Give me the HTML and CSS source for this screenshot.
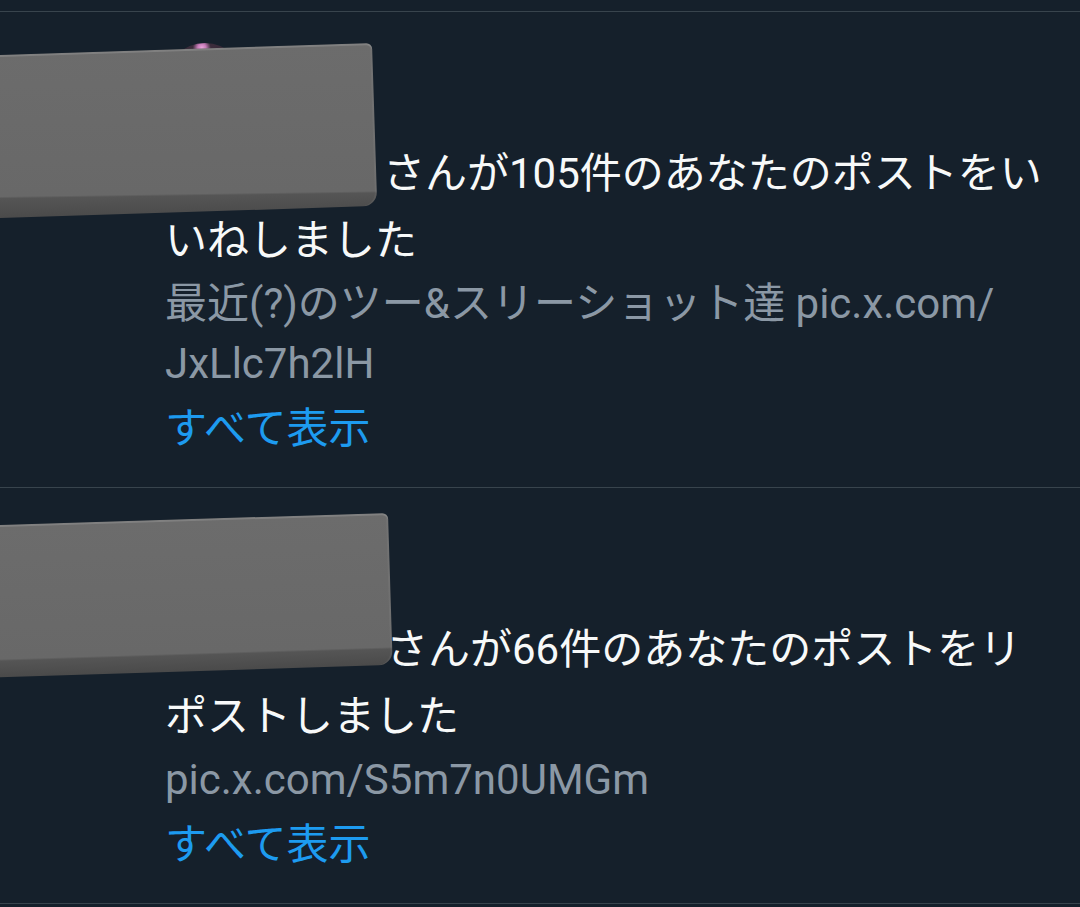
FILE: index.html
```html
<!DOCTYPE html>
<html lang="ja">
<head>
<meta charset="utf-8">
<title>通知</title>
<link rel="stylesheet" href="styles.css">
</head>
<body>
<div class="feed">
  <article class="notif">
    <div class="icon-col">
      <svg class="icon icon-like" viewBox="0 0 24 24" aria-hidden="true"><path d="M20.884 13.19c-1.351 2.48-4.001 5.12-8.379 7.67l-.503.3-.504-.3c-4.379-2.55-7.029-5.19-8.382-7.67-1.36-2.5-1.41-4.86-.514-6.67.887-1.79 2.647-2.91 4.601-3.01 1.651-.09 3.368.56 4.798 2.01 1.429-1.45 3.146-2.1 4.796-2.01 1.954.1 3.714 1.22 4.601 3.01.896 1.81.846 4.17-.514 6.67z"/></svg>
    </div>
    <div class="content">
      <div class="avatar avatar-a"></div>
      <p class="title"><span class="name-slot slot-a" aria-label="ユーザー名"></span>さんが105件のあなたのポストをいいねしました</p>
      <p class="text">最近(?)のツー&amp;スリーショット達 pic.x.com/<wbr>JxLlc7h2lH</p>
      <a class="more" href="#">すべて表示</a>
    </div>
    <div class="redact redact-a"></div>
  </article>
  <article class="notif">
    <div class="icon-col">
      <svg class="icon icon-repost" viewBox="0 0 24 24" aria-hidden="true"><path d="M4.75 3.79l4.603 4.3-1.706 1.82L6 8.38v7.37c0 .97.784 1.75 1.75 1.75H13V20H7.75c-2.347 0-4.25-1.9-4.25-4.25V8.38L1.853 9.91.147 8.09l4.603-4.3zm11.5 2.71H11V4h5.25c2.347 0 4.25 1.9 4.25 4.25v7.37l1.647-1.53 1.706 1.82-4.603 4.3-4.603-4.3 1.706-1.82L18 15.62V8.25c0-.97-.784-1.75-1.75-1.75z"/></svg>
    </div>
    <div class="content">
      <div class="avatar avatar-b"></div>
      <p class="title"><span class="name-slot slot-b" aria-label="ユーザー名"></span>さんが66件のあなたのポストをリポストしました</p>
      <p class="text">pic.x.com/S5m7n0UMGm</p>
      <a class="more" href="#">すべて表示</a>
    </div>
    <div class="redact redact-b"></div>
  </article>
</div>
</body>
</html>
```

FILE: styles.css
```css
* { box-sizing: border-box; }

html, body {
  margin: 0;
  background: #15202b;
}

body {
  padding-top: 11px;
  font-family: Roboto, "Noto Sans CJK JP", sans-serif;
  overflow: hidden;
}

.feed {
  border-top: 1px solid #38444d;
}

.notif {
  position: relative;
  display: flex;
  border-bottom: 1px solid #38444d;
}

.icon-col {
  flex: none;
  width: 165px;
  display: flex;
  justify-content: flex-end;
  align-items: flex-start;
  padding: 50px 24px 0 0;
}

.icon {
  width: 70px;
  height: 70px;
}

.icon-like { fill: #f91880; }
.icon-repost { fill: #00ba7c; }

.content {
  flex: 1;
  min-width: 0;
  padding: 31px 30px 28px 0;
}

.avatar {
  width: 80px;
  height: 80px;
  border-radius: 50%;
  margin-bottom: 17px;
}

.avatar-a {
  background: radial-gradient(circle at 46% 6%, #e9a6dc 0, #c77cb9 4px, #3b2c3b 9px, #2a2230 60%);
}

.avatar-b {
  background: #2f3a44;
}

.title {
  margin: 0;
  font-size: 42px;
  line-height: 67px;
  color: #f7f9f9;
}

.name-slot {
  display: inline-block;
  height: 0;
  vertical-align: baseline;
}

.slot-a { width: 218px; }
.slot-b { width: 221px; }

.text {
  margin: 0;
  font-size: 42px;
  line-height: 60px;
  color: #8b98a5;
}

.more {
  display: block;
  margin-top: 5px;
  font-size: 42px;
  line-height: 60px;
  color: #1d9bf0;
  text-decoration: none;
}

.redact {
  position: absolute;
  left: -30px;
  transform-origin: 100% 0;
  border-radius: 3px 6px 14px 2px;
  box-shadow: inset 0 2px 0 rgba(255, 255, 255, 0.14), inset -2px 0 0 rgba(255, 255, 255, 0.05);
}

.redact-a {
  top: 31px;
  width: 402px;
  height: 163px;
  transform: rotate(-1.85deg);
  background: linear-gradient(181deg, #6c6c6c 0, #686868 148px, #555555 150px, #4a4a4a 170px);
}

.redact-b {
  top: 25px;
  width: 418px;
  height: 152px;
  transform: rotate(-1.78deg);
  background: linear-gradient(180deg, #6c6c6c 0, #686868 134px, #555555 136px, #4a4a4a 152px);
}
```
